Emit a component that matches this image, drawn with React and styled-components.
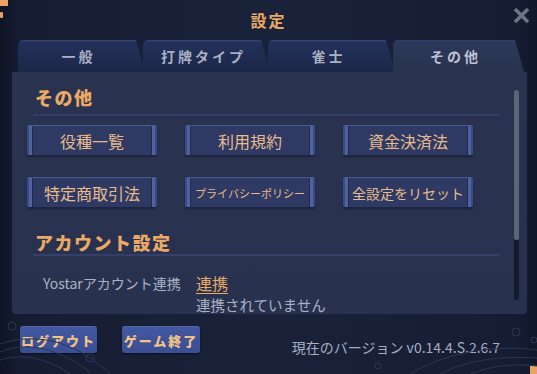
import styled, { createGlobalStyle } from "styled-components"

const GlobalStyle = createGlobalStyle`
    html, body {
        margin: 0;
        padding: 0;
        background: #161d31;
    }

    body {
        font-family: "Noto Sans CJK JP", "Noto Sans", sans-serif;
    }
`

const ScScreen = styled.div`
    position: relative;
    width: 537px;
    height: 374px;
    overflow: hidden;
    display: flex;
    flex-direction: column;
    background: linear-gradient(90deg, #0f1527 0, #161d33 4%, #1a2239 50%, #161d33 96%, #11172a 100%);
`

const ScDecor = styled.svg`
    position: absolute;
    left: 0;
    top: 0;
    width: 537px;
    height: 374px;
    pointer-events: none;
`

const ScHeader = styled.header`
    position: relative;
    height: 40px;
    display: flex;
    align-items: center;
    justify-content: center;

    h1 {
        margin: 0;
        font-size: 16px;
        font-weight: 700;
        line-height: 20px;
        color: #eaa966;
        letter-spacing: 2px;
    }
`

const ScClose = styled.svg`
    position: absolute;
    right: 7px;
    top: 7px;
    width: 17px;
    height: 17px;
`

const ScTabs = styled.nav`
    display: flex;
    padding-left: 18px;
    height: 32px;
`

const ScTab = styled.div`
    width: ${({ $last }) => ($last ? "131px" : "127px")};
    margin-right: -2px;
    display: flex;
    align-items: center;
    justify-content: center;
    padding-right: 6px;
    box-sizing: border-box;
    border-radius: 5px 5px 0 0;
    clip-path: polygon(0 0, calc(100% - 9px) 0, 100% 100%, 0 100%);
    font-size: 14px;
    font-weight: 700;
    letter-spacing: 3px;
    color: ${({ $active }) => ($active ? "#bcc3d4" : "#a9b1c4")};
    background: ${({ $active }) => ($active
        ? "linear-gradient(180deg, #33406a 0, #2c3859 2px, #29334f 100%)"
        : "linear-gradient(180deg, #3a4a7c 0, #23305a 2px, #1c2748 100%)")};
`

const ScPanel = styled.section`
    margin-left: 12px;
    width: 515px;
    height: 242px;
    display: flex;
    background: linear-gradient(180deg, #29334f 0, #28324f 100%);
    border-radius: 0 0 4px 4px;
`

const ScContent = styled.div`
    flex: 1;
    padding: 14px 0 0 15px;
`

const ScHeading = styled.h2`
    margin: ${({ $first }) => ($first ? "0" : "23px")} 0 0 8px;
    font-size: 18px;
    font-weight: 800;
    line-height: 22px;
    letter-spacing: 1.5px;
    color: #eaa966;
`

const ScDivider = styled.div`
    margin: ${({ $gap }) => $gap}px 0 0 6px;
    width: 467px;
    height: 2px;
    background: #34406a;
`

const ScGrid = styled.div`
    margin-top: 9px;
    display: grid;
    grid-template-columns: repeat(3, 130px);
    column-gap: 28px;
    row-gap: 21px;
`

const ScButton = styled.button`
    height: 31px;
    padding: 0;
    border: none;
    border-top: 1px solid #4b5b90;
    border-bottom: 1px solid #1d2542;
    border-radius: 2px;
    font-family: inherit;
    font-size: ${({ $size }) => $size}px;
    color: #e9bb8c;
    white-space: nowrap;
    background: linear-gradient(90deg,
        #3b4b84 0 2px,
        #4f63a1 2px 5px,
        #212a4c 5px 6px,
        #2e3a63 6px calc(100% - 6px),
        #212a4c calc(100% - 6px) calc(100% - 5px),
        #4f63a1 calc(100% - 5px) calc(100% - 2px),
        #3b4b84 calc(100% - 2px));
    box-shadow: 0 1px 2px rgba(0, 0, 0, .35);
    cursor: pointer;
`

const ScAccount = styled.div`
    margin-top: 15px;
    display: grid;
    grid-template-columns: 153px auto;
    padding-left: 16px;
    align-items: center;
`

const ScLabel = styled.span`
    font-size: 14px;
    line-height: 20px;
    color: #aab2c6;
`

const ScLink = styled.a`
    font-size: 16px;
    line-height: 24px;
    color: #eaa966;
    text-decoration: underline;
    text-underline-offset: 3px;
    text-decoration-thickness: 1px;
    justify-self: start;
`

const ScStatus = styled.span`
    grid-column: 2;
    font-size: 14.5px;
    line-height: 20px;
    color: #aab2c6;
`

const ScScrollbar = styled.div`
    width: 5px;
    margin: 18px 8px 14px 0;
    display: flex;
    flex-direction: column;
    background: #131a2e;
    border-radius: 2px;

    &::before {
        content: "";
        display: block;
        height: 150px;
        background: #5b6478;
        border-radius: 2px;
    }
`

const ScFooter = styled.footer`
    display: flex;
    align-items: flex-start;
    gap: 25px;
    padding: 12px 37px 0 20px;
`

const ScFooterButton = styled.button`
    width: ${({ $w }) => $w}px;
    height: 27px;
    padding: 0;
    border: none;
    border-top: 1px solid #5366a8;
    border-radius: 3px;
    font-family: inherit;
    font-size: 13px;
    font-weight: 800;
    letter-spacing: 2px;
    color: #f1c386;
    background: linear-gradient(180deg, #4258a0 0, #3a4e93 100%);
    box-shadow: 0 1px 2px rgba(0, 0, 0, .5);
    cursor: pointer;
`

const ScVersion = styled.span`
    margin: 11px 0 0 auto;
    font-size: 14px;
    line-height: 20px;
    color: #a6aec2;
`

const tabs = ["一般", "打牌タイプ", "雀士", "その他"]
const buttons = [
    { label: "役種一覧", size: 16 },
    { label: "利用規約", size: 16 },
    { label: "資金決済法", size: 16 },
    { label: "特定商取引法", size: 16 },
    { label: "プライバシーポリシー", size: 11 },
    { label: "全設定をリセット", size: 14 },
]

function Decorations() {
    return (
        <ScDecor viewBox="0 0 537 374">
            <rect x="0" y="0" width="8" height="6" fill="#e7a465" />
            <rect x="0" y="12" width="3" height="6" rx="1" fill="#e7a465" />
            <rect x="530" y="366" width="7" height="8" fill="#e7a465" />
            <g fill="none" stroke="#2c3552" strokeWidth="1">
                <path d="M0 352 C30 340 60 350 90 372" />
                <path d="M0 360 C25 352 50 360 70 374" />
                <path d="M0 344 C40 330 80 345 110 374" />
                <circle cx="12" cy="326" r="4" />
                <circle cx="90" cy="358" r="4" />
                <path d="M410 374 C450 350 500 345 537 350" />
                <path d="M440 374 C470 358 510 356 537 358" />
                <path d="M470 374 C495 364 520 364 537 366" />
                <circle cx="516" cy="332" r="4" />
                <circle cx="534" cy="340" r="3" />
                <circle cx="378" cy="366" r="3" />
            </g>
        </ScDecor>
    )
}

function App() {
    return (
        <>
            <GlobalStyle />
            <ScScreen>
                <Decorations />
                <ScHeader>
                    <h1>設定</h1>
                    <ScClose viewBox="0 0 17 17">
                        <path d="M2 2 L15 15 M15 2 L2 15" stroke="#6c7486" strokeWidth="3.6" strokeLinecap="butt" />
                    </ScClose>
                </ScHeader>
                <ScTabs>
                    {tabs.map((tab, i) =>
                        <ScTab key={tab} $active={i === 3} $last={i === 3}>{tab}</ScTab>,
                    )}
                </ScTabs>
                <ScPanel>
                    <ScContent>
                        <ScHeading $first>その他</ScHeading>
                        <ScDivider $gap={6} />
                        <ScGrid>
                            {buttons.map(b =>
                                <ScButton key={b.label} $size={b.size}>{b.label}</ScButton>,
                            )}
                        </ScGrid>
                        <ScHeading>アカウント設定</ScHeading>
                        <ScDivider $gap={1} />
                        <ScAccount>
                            <ScLabel>Yostarアカウント連携</ScLabel>
                            <ScLink>連携</ScLink>
                            <ScStatus>連携されていません</ScStatus>
                        </ScAccount>
                    </ScContent>
                    <ScScrollbar />
                </ScPanel>
                <ScFooter>
                    <ScFooterButton $w={77}>ログアウト</ScFooterButton>
                    <ScFooterButton $w={78}>ゲーム終了</ScFooterButton>
                    <ScVersion>現在のバージョン v0.14.4.S.2.6.7</ScVersion>
                </ScFooter>
            </ScScreen>
        </>
    )
}

export default App
